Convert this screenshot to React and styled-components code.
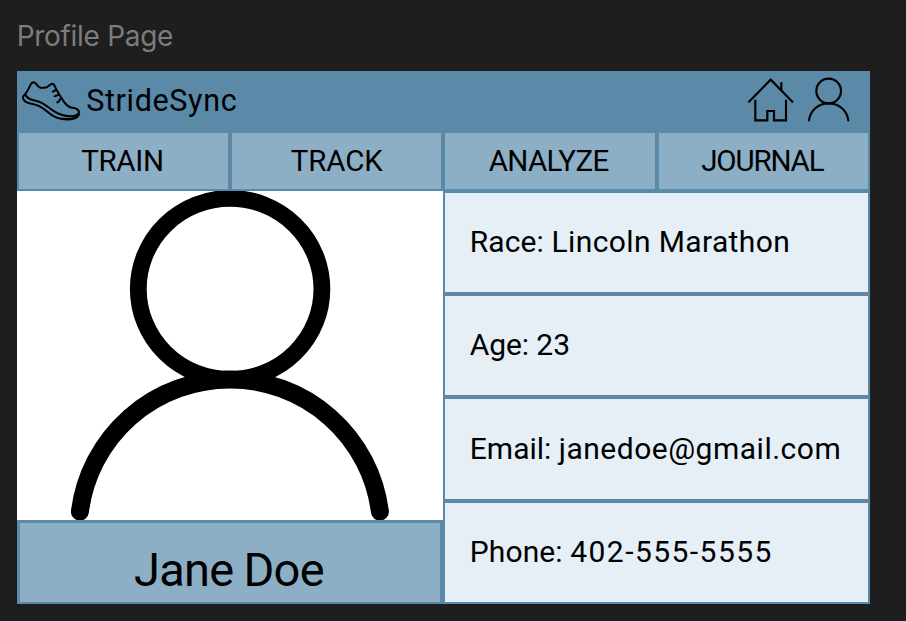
import React from "react";
import styled, { createGlobalStyle } from "styled-components";

const GlobalStyle = createGlobalStyle`
  * { box-sizing: border-box; }
  html, body { margin: 0; background: #1e1e1e; }
  body { overflow: hidden; }
`;

const Canvas = styled.div`
  width: 906px;
  height: 621px;
  padding: 17px 0 0 16.7px;
  background: #1e1e1e;
  color: #000;
  font-family: Roboto, "Liberation Sans", sans-serif;
`;

const FrameLabel = styled.div`
  height: 54px;
  color: #7c7c7c;
  font-family: Inter, sans-serif;
  font-size: 28px;
  line-height: 38px;
  letter-spacing: -0.3px;
  white-space: nowrap;
`;

const Frame = styled.main`
  width: 853px;
  height: 533.4px;
  background: #5b89a8;
`;

const Header = styled.header`
  display: flex;
  align-items: flex-start;
  height: 62px;
  padding: 5.6px 18.6px 0 3px;
`;

const ShoeSvg = styled.svg`
  width: 61px;
  height: 43px;
  margin-top: 1.2px;
  flex: none;
`;

const Brand = styled.div`
  flex: 1;
  padding-left: 5.5px;
  font-size: 30.5px;
  line-height: 47px;
`;

const HeaderIcon = styled.svg`
  flex: none;
  width: ${(p) => p.$w}px;
  height: 46px;
  margin-left: ${(p) => p.$gap}px;
`;

const Text = styled.span`
  display: inline-block;
  white-space: pre;
  letter-spacing: ${(p) => p.$spacing || 0}px;
  word-spacing: ${(p) => p.$word || 0}px;
`;

const Tabs = styled.nav`
  display: grid;
  grid-template-columns: 209px 209.4px 209.6px 1fr;
  column-gap: 4px;
  height: 55.3px;
  padding: 0 2px 0 2.3px;
`;

const Tab = styled.div`
  display: flex;
  justify-content: center;
  background: #8cafc6;
  font-size: 29.5px;
  line-height: 56px;
  padding-right: ${(p) => p.$shift || 0}px;
`;

const Body = styled.div`
  display: grid;
  grid-template-columns: 426.5px 1fr;
  grid-template-rows: 100%;
  height: 416.1px;
`;

const Profile = styled.section`
  display: flex;
  flex-direction: column;
  padding-top: 2.3px;
`;

const Photo = styled.div`
  flex: none;
  height: 329.4px;
  background: #fff;
`;

const PhotoSvg = styled.svg`
  display: block;
  width: 426.5px;
  height: 329.4px;
`;

const Name = styled.div`
  flex: 1;
  display: flex;
  justify-content: center;
  margin: 3px;
  padding: 14px 2px 0 0;
  background: #8cafc6;
  font-size: 47px;
  line-height: 65px;
`;

const Details = styled.section`
  display: grid;
  grid-template-rows: repeat(4, 1fr);
  gap: 4px;
  padding: 4.5px 2px 2.4px 2px;
`;

const Detail = styled.div`
  display: flex;
  align-items: center;
  padding: 0 0 2px 24.6px;
  background: #e6eef6;
  font-size: 30px;
`;

const Shoe = () => (
  <ShoeSvg viewBox="60 54 183 129" fill="none" stroke="#000" strokeWidth="6" strokeLinecap="round" strokeLinejoin="round">
    <path d="M75 103C83 94 87 82 93 72C97 66 101 66 106 69C111 74 113 81 121 83C127 85 132 82 138 83C145 80 150 72 157 71C162 71 164 77 166 82C173 97 183 112 193 127C199 135 206 141 215 143C223 144 232 144 236 153C240 162 235 172 225 175C208 180 187 179 170 173C148 165 139 149 119 139C103 131 84 132 73 122C66 115 69 107 75 103Z" />
    <path d="M76 104C81 117 95 120 110 123C130 127 143 141 158 151C177 164 202 170 221 168C229 167 235 163 237 158" />
    <path d="M159 95L166 91M164 109L174 105M172 127L178 123L180 117" />
    <path d="M187 176C207 178 225 176 234 166" />
  </ShoeSvg>
);

const Home = () => (
  <HeaderIcon $w={47} $gap={0} viewBox="51 48 141 138" fill="none" stroke="#000" strokeWidth="6.5" strokeLinecap="round" strokeLinejoin="miter">
    <path d="M57 122L122 56L187 122M154 66V86M76 119V178H112V150H132V178H168V119" />
  </HeaderIcon>
);

const User = () => (
  <HeaderIcon $w={44} $gap={13} viewBox="231 48 132 138" fill="none" stroke="#000" strokeWidth="6.5" strokeLinecap="round">
    <circle cx="296" cy="90" r="37" />
    <path d="M237 178C241 147 266 127 296 127C326 127 351 147 355 178" />
  </HeaderIcon>
);

const Portrait = () => (
  <PhotoSvg viewBox="16.7 190.6 426.5 329.4" fill="none" stroke="#000" strokeLinecap="round">
    <ellipse cx="229.8" cy="288.5" rx="91.8" ry="90.5" strokeWidth="16.8" />
    <path d="M79.6 511.2A151.2 151.2 0 0 1 379.6 511.2" strokeWidth="18" />
  </PhotoSvg>
);

const tabs = [
  { label: "TRAIN", spacing: -0.3, shift: 2 },
  { label: "TRACK", spacing: -0.1, shift: 0 },
  { label: "ANALYZE", spacing: -0.65, shift: 3 },
  { label: "JOURNAL", spacing: -1.15, shift: 2 },
];

const details = [
  { label: "Race:", value: "Lincoln Marathon", labelSpacing: 0.1, spacing: 0.38 },
  { label: "Age:", value: "23", labelSpacing: -0.1, spacing: 0 },
  { label: "Email:", value: "janedoe@gmail.com", labelSpacing: 0, spacing: 0.5 },
  { label: "Phone:", value: "402-555-5555", labelSpacing: 0.1, spacing: 1.45 },
];

export default function App() {
  return (
    <Canvas>
      <GlobalStyle />
      <FrameLabel>Profile Page</FrameLabel>
      <Frame>
        <Header>
          <Shoe />
          <Brand><Text $spacing={0.65}>StrideSync</Text></Brand>
          <Home />
          <User />
        </Header>
        <Tabs>
          {tabs.map((t) => (
            <Tab key={t.label} $shift={t.shift}><Text $spacing={t.spacing}>{t.label}</Text></Tab>
          ))}
        </Tabs>
        <Body>
          <Profile>
            <Photo><Portrait /></Photo>
            <Name><Text $spacing={-0.7} $word={-1}>Jane Doe</Text></Name>
          </Profile>
          <Details>
            {details.map((d) => (
              <Detail key={d.label}>
                <Text $spacing={d.labelSpacing}>{d.label + " "}</Text>
                <Text $spacing={d.spacing}>{d.value}</Text>
              </Detail>
            ))}
          </Details>
        </Body>
      </Frame>
    </Canvas>
  );
}
